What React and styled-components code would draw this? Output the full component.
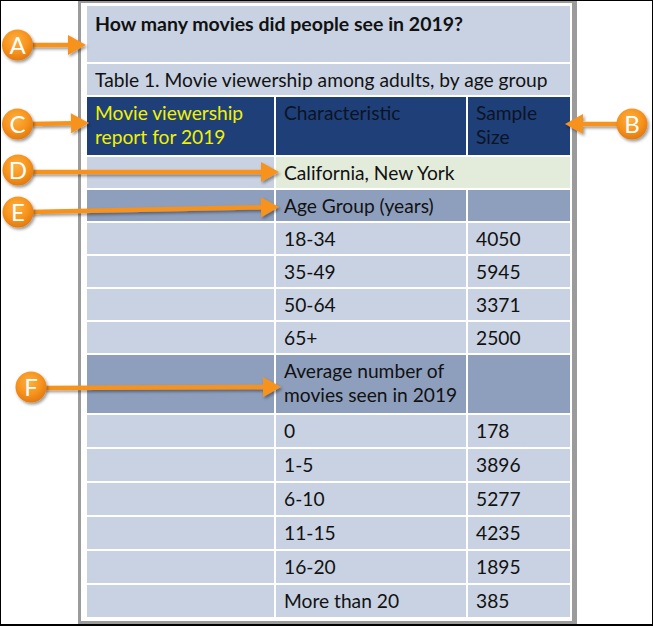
import React from 'react';
import styled, { createGlobalStyle } from 'styled-components';

const GlobalStyle = createGlobalStyle`
  html, body { margin: 0; padding: 0; background: #fff; }
  body { font-family: Lato, "Open Sans", sans-serif; }
`;

const tones = {
  light: '#c8d2e2',
  mid: '#8e9fbd',
  navy: '#1f3f79',
  green: '#e3ebda',
};

const Frame = styled.div`
  position: relative;
  box-sizing: border-box;
  width: 653px;
  height: 626px;
  border: 1px solid #000;
  border-bottom-width: 2px;
  padding-left: 77px;
  background: #fff;
  overflow: hidden;
`;

const Page = styled.div`
  box-sizing: border-box;
  width: 499px;
  height: 100%;
  border: solid #9b9b9b;
  border-width: 2px 5px 3px 3px;
  padding: 3px 2px 2px 6px;
  background: #fff;
`;

const Table = styled.div`
  display: flex;
  flex-direction: column;
  gap: 2px;
`;

const Row = styled.div`
  display: grid;
  grid-template-columns: 187px 190px 102px;
  column-gap: 2px;
  height: ${p => p.$h}px;
`;

const Cell = styled.div`
  grid-column: span ${p => p.$span || 1};
  background: ${p => tones[p.$tone || 'light']};
  color: ${p => p.$ink || '#111'};
  padding: ${p => (p.$bold ? '6px' : '4px')} 8px 0;
  font-size: ${p => (p.$bold ? '19.5px' : '19.2px')};
  line-height: 24px;
  font-weight: ${p => (p.$bold ? 700 : 400)};
  white-space: nowrap;
`;

const Overlay = styled.svg`
  position: absolute;
  top: -1px;
  left: -1px;
  width: 653px;
  height: 626px;
  pointer-events: none;
`;

const ORANGE = '#f7931e';

function Callout({ letter, cx, cy, x1, y1, x2, y2 }) {
  const dx = x2 - x1;
  const dy = y2 - y1;
  const len = Math.hypot(dx, dy);
  const ux = dx / len;
  const uy = dy / len;
  const L = 18;
  const W = 10;
  const bx = x2 - ux * L;
  const by = y2 - uy * L;
  const head = `${x2},${y2} ${bx - uy * W},${by + ux * W} ${bx + uy * W},${by - ux * W}`;
  return (
    <g>
      <g filter="url(#shadow)">
        <line x1={x1} y1={y1} x2={bx + ux * 2} y2={by + uy * 2} stroke={ORANGE} strokeWidth="4.5" />
        <polygon points={head} fill={ORANGE} />
      </g>
      <circle cx={cx} cy={cy} r="15.5" fill="url(#ball)" filter="url(#shadow)" />
      <text
        x={cx}
        y={cy + 8.5}
        textAnchor="middle"
        fill="#fff"
        fontSize="24"
        fontFamily="Lato, 'Open Sans', sans-serif"
      >
        {letter}
      </text>
    </g>
  );
}

const upper = [
  ['18-34', '4050'],
  ['35-49', '5945'],
  ['50-64', '3371'],
  ['65+', '2500'],
];

const lower = [
  ['0', '178'],
  ['1-5', '3896'],
  ['6-10', '5277'],
  ['11-15', '4235'],
  ['16-20', '1895'],
  ['More than 20', '385'],
];

export default function App() {
  return (
    <>
      <GlobalStyle />
      <Frame>
        <Page>
          <Table>
            <Row $h={56}>
              <Cell $span={3} $bold>How many movies did people see in 2019?</Cell>
            </Row>
            <Row $h={31}>
              <Cell $span={3}>Table 1. Movie viewership among adults, by age group</Cell>
            </Row>
            <Row $h={58}>
              <Cell $tone="navy" $ink="#f2f200">Movie viewership<br />report for 2019</Cell>
              <Cell $tone="navy" $ink="#0c1424">Characteristic</Cell>
              <Cell $tone="navy" $ink="#0c1424">Sample<br />Size</Cell>
            </Row>
            <Row $h={31}>
              <Cell />
              <Cell $span={2} $tone="green">California, New York</Cell>
            </Row>
            <Row $h={31}>
              <Cell $tone="mid" />
              <Cell $tone="mid">Age Group (years)</Cell>
              <Cell $tone="mid" />
            </Row>
            {upper.map(([k, v]) => (
              <Row $h={31} key={k}>
                <Cell />
                <Cell>{k}</Cell>
                <Cell>{v}</Cell>
              </Row>
            ))}
            <Row $h={58}>
              <Cell $tone="mid" />
              <Cell $tone="mid">Average number of<br />movies seen in 2019</Cell>
              <Cell $tone="mid" />
            </Row>
            {lower.map(([k, v]) => (
              <Row $h={32} key={k}>
                <Cell />
                <Cell>{k}</Cell>
                <Cell>{v}</Cell>
              </Row>
            ))}
          </Table>
        </Page>
        <Overlay viewBox="0 0 653 626">
          <defs>
            <filter id="shadow" x="-20%" y="-40%" width="150%" height="200%">
              <feDropShadow dx="1.5" dy="2" stdDeviation="1.6" floodColor="#000" floodOpacity="0.4" />
            </filter>
            <radialGradient id="ball" cx="45%" cy="35%" r="65%">
              <stop offset="0%" stopColor="#fbb040" />
              <stop offset="60%" stopColor="#f7931e" />
              <stop offset="100%" stopColor="#e27a10" />
            </radialGradient>
          </defs>
          <Callout letter="A" cx={17.5} cy={45} x1={30} y1={45} x2={86} y2={45} />
          <Callout letter="C" cx={17.5} cy={124} x1={30} y1={124} x2={89} y2={123} />
          <Callout letter="B" cx={632} cy={124} x1={620} y1={124} x2={565} y2={124} />
          <Callout letter="D" cx={18} cy={170} x1={30} y1={172} x2={279} y2={172} />
          <Callout letter="E" cx={18} cy={212} x1={30} y1={212} x2={279} y2={207} />
          <Callout letter="F" cx={31} cy={387} x1={44} y1={388} x2={281} y2={387} />
        </Overlay>
      </Frame>
    </>
  );
}
